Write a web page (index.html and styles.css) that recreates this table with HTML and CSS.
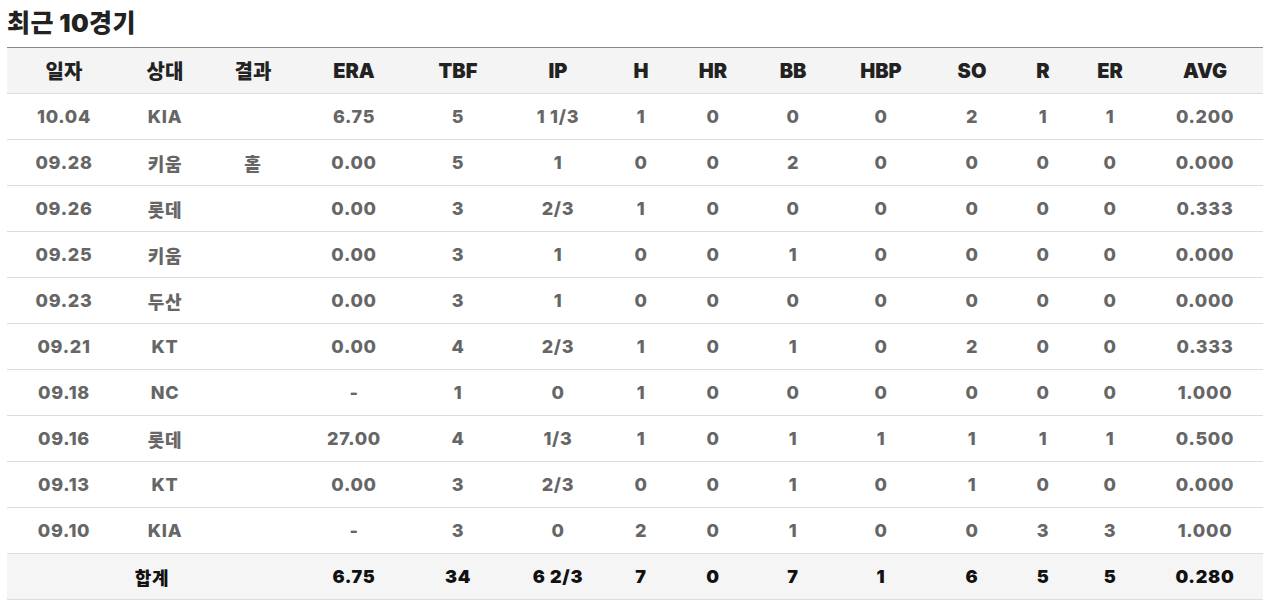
FILE: index.html
```html
<!DOCTYPE html>
<html lang="ko">
<head>
<meta charset="utf-8">
<link rel="stylesheet" href="styles.css">
</head>
<body>
<h2 class="title">최근 10경기</h2>
<table class="games">
  <colgroup>
    <col class="c1"><col class="c2"><col class="c3"><col class="c4"><col class="c5"><col class="c6"><col class="c7">
    <col class="c8"><col class="c9"><col class="c10"><col class="c11"><col class="c12"><col class="c13"><col class="c14">
  </colgroup>
  <thead>
    <tr><th>일자</th><th>상대</th><th>결과</th><th>ERA</th><th>TBF</th><th>IP</th><th>H</th><th>HR</th><th>BB</th><th>HBP</th><th>SO</th><th>R</th><th>ER</th><th>AVG</th></tr>
  </thead>
  <tbody>
    <tr><td>10.04</td><td>KIA</td><td></td><td>6.75</td><td>5</td><td>1 1/3</td><td>1</td><td>0</td><td>0</td><td>0</td><td>2</td><td>1</td><td>1</td><td>0.200</td></tr>
    <tr><td>09.28</td><td>키움</td><td>홀</td><td>0.00</td><td>5</td><td>1</td><td>0</td><td>0</td><td>2</td><td>0</td><td>0</td><td>0</td><td>0</td><td>0.000</td></tr>
    <tr><td>09.26</td><td>롯데</td><td></td><td>0.00</td><td>3</td><td>2/3</td><td>1</td><td>0</td><td>0</td><td>0</td><td>0</td><td>0</td><td>0</td><td>0.333</td></tr>
    <tr><td>09.25</td><td>키움</td><td></td><td>0.00</td><td>3</td><td>1</td><td>0</td><td>0</td><td>1</td><td>0</td><td>0</td><td>0</td><td>0</td><td>0.000</td></tr>
    <tr><td>09.23</td><td>두산</td><td></td><td>0.00</td><td>3</td><td>1</td><td>0</td><td>0</td><td>0</td><td>0</td><td>0</td><td>0</td><td>0</td><td>0.000</td></tr>
    <tr><td>09.21</td><td>KT</td><td></td><td>0.00</td><td>4</td><td>2/3</td><td>1</td><td>0</td><td>1</td><td>0</td><td>2</td><td>0</td><td>0</td><td>0.333</td></tr>
    <tr><td>09.18</td><td>NC</td><td></td><td>-</td><td>1</td><td>0</td><td>1</td><td>0</td><td>0</td><td>0</td><td>0</td><td>0</td><td>0</td><td>1.000</td></tr>
    <tr><td>09.16</td><td>롯데</td><td></td><td>27.00</td><td>4</td><td>1/3</td><td>1</td><td>0</td><td>1</td><td>1</td><td>1</td><td>1</td><td>1</td><td>0.500</td></tr>
    <tr><td>09.13</td><td>KT</td><td></td><td>0.00</td><td>3</td><td>2/3</td><td>0</td><td>0</td><td>1</td><td>0</td><td>1</td><td>0</td><td>0</td><td>0.000</td></tr>
    <tr><td>09.10</td><td>KIA</td><td></td><td>-</td><td>3</td><td>0</td><td>2</td><td>0</td><td>1</td><td>0</td><td>0</td><td>3</td><td>3</td><td>1.000</td></tr>
  </tbody>
  <tfoot>
    <tr><td colspan="3">합계</td><td>6.75</td><td>34</td><td>6 2/3</td><td>7</td><td>0</td><td>7</td><td>1</td><td>6</td><td>5</td><td>5</td><td>0.280</td></tr>
  </tfoot>
</table>
</body>
</html>
```

FILE: styles.css
```css
html, body {
  margin: 0;
  background: #fff;
}
body {
  padding: 7px 7px 0 7px;
  font-family: Inter, "Noto Sans CJK KR", "Noto Sans", sans-serif;
}
.title {
  margin: 0 0 8px 0;
  font-size: 25px;
  line-height: 32px;
  font-weight: 900;
  color: #222;
  letter-spacing: 0.4px;
}
.games {
  width: 1256px;
  border-collapse: collapse;
  table-layout: fixed;
  font-size: 18px;
  font-weight: 800;
  letter-spacing: 0.7px;
}
.c1 { width: 114px; }
.c2 { width: 88px; }
.c3 { width: 88px; }
.c4 { width: 114px; }
.c5 { width: 94px; }
.c6 { width: 106px; }
.c7 { width: 60px; }
.c8 { width: 84px; }
.c9 { width: 76px; }
.c10 { width: 100px; }
.c11 { width: 82px; }
.c12 { width: 60px; }
.c13 { width: 74px; }
.c14 { width: 116px; }
.games th, .games td {
  padding: 0;
  text-align: center;
  white-space: nowrap;
}
.games thead tr {
  background: #f4f4f4;
  border-top: 1px solid #888;
  border-bottom: 1px solid #ddd;
}
.games th {
  height: 45px;
  color: #222;
  font-size: 20px;
  font-weight: 900;
  letter-spacing: 0;
}
.games tbody td {
  height: 45px;
  color: #666;
  border-bottom: 1px solid #ddd;
}
.games tfoot tr {
  background: #f5f5f5;
  border-bottom: 1px solid #ddd;
}
.games tfoot td {
  height: 45px;
  color: #111;
  font-weight: 900;
}
```
